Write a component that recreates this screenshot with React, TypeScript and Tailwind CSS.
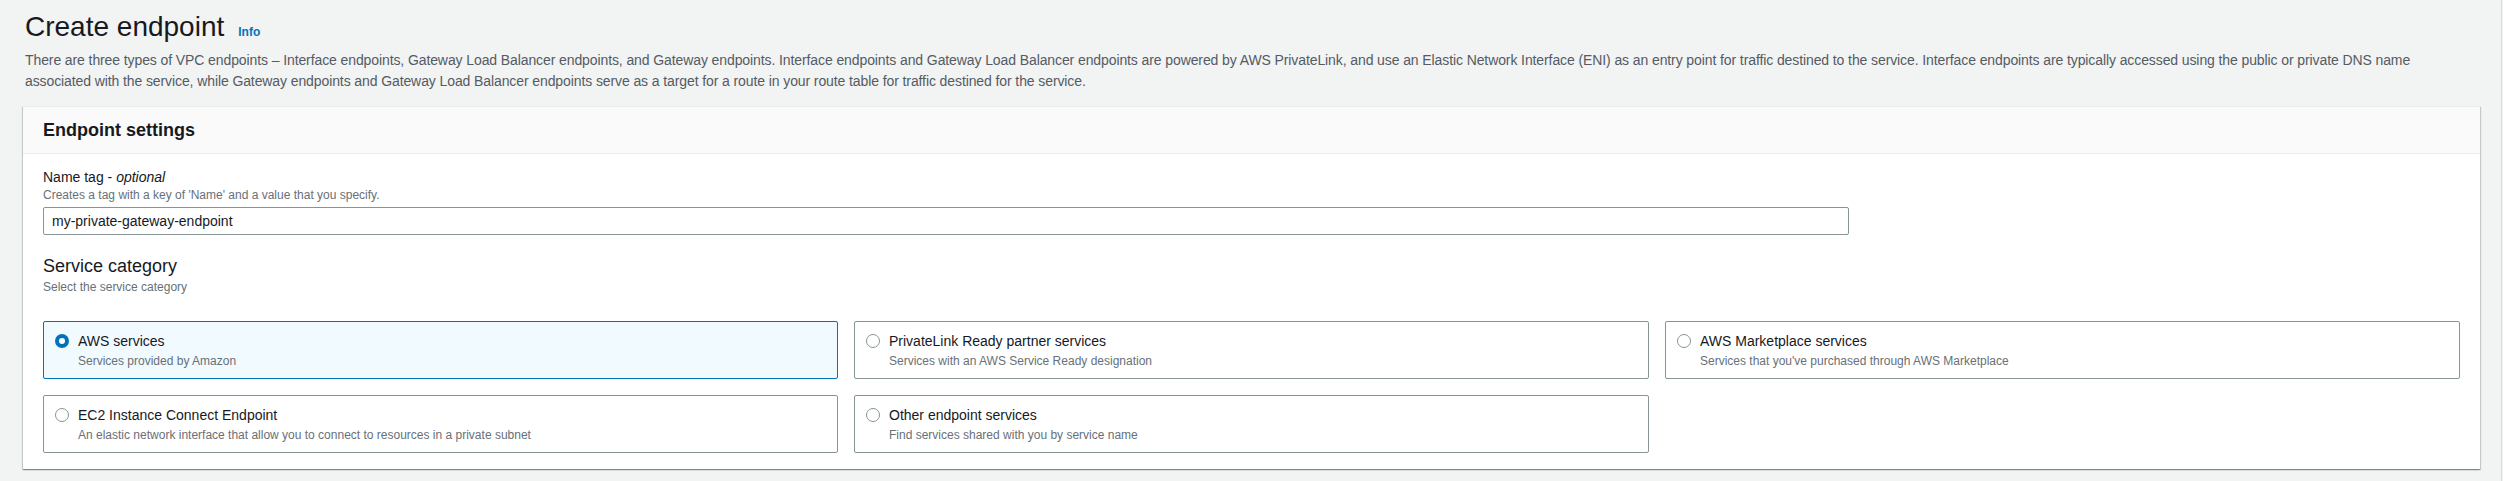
import React from "react";

type Opt = { title: string; desc: string; selected?: boolean };

const options: Opt[] = [
  { title: "AWS services", desc: "Services provided by Amazon", selected: true },
  { title: "PrivateLink Ready partner services", desc: "Services with an AWS Service Ready designation" },
  { title: "AWS Marketplace services", desc: "Services that you've purchased through AWS Marketplace" },
  { title: "EC2 Instance Connect Endpoint", desc: "An elastic network interface that allow you to connect to resources in a private subnet" },
  { title: "Other endpoint services", desc: "Find services shared with you by service name" },
];

function Radio({ selected }: { selected?: boolean }) {
  return selected ? (
    <span className="mt-[3px] box-border block h-[14px] w-[14px] shrink-0 rounded-full border-[4px] border-[#0073bb] bg-white" />
  ) : (
    <span className="mt-[3px] box-border block h-[14px] w-[14px] shrink-0 rounded-full border border-[#879596] bg-white" />
  );
}

function Tile({ o }: { o: Opt }) {
  return (
    <div
      className={
        o.selected
          ? "flex gap-[9px] rounded-[2px] border border-[#0073bb] bg-[#f1faff] pl-[11px] pr-3 py-[9px]"
          : "flex gap-[9px] rounded-[2px] border border-[#879596] bg-white pl-[11px] pr-3 py-[9px]"
      }
    >
      <Radio selected={o.selected} />
      <div className="flex flex-col">
        <div className="text-[14px] leading-5 text-[#16191f]">{o.title}</div>
        <div className="mt-[2px] text-[12px] leading-4 text-[#687078]">{o.desc}</div>
      </div>
    </div>
  );
}

export default function App() {
  return (
    <div
      className="flex h-[481px] w-full bg-[#f2f3f3]"
      style={{ fontFamily: '"Liberation Sans", Arial, sans-serif' }}
    >
      <div className="flex-1 border-r border-[#d5dbdb] pl-[23px] pr-[21px]">
        <div className="flex items-baseline gap-[14px] pl-[2px] pt-[9px]">
          <h1 className="text-[28px] leading-[36px] font-normal text-[#16191f]">Create endpoint</h1>
          <span className="text-[12px] font-bold leading-4 text-[#0073bb]">Info</span>
        </div>
        <p className="mt-[5px] whitespace-nowrap pl-[2px] text-[14px] leading-[21px] tracking-[-0.1px] text-[#545b64]">
          There are three types of VPC endpoints – Interface endpoints, Gateway Load Balancer endpoints, and Gateway endpoints. Interface endpoints and Gateway Load Balancer endpoints are powered by AWS PrivateLink, and use an Elastic Network Interface (ENI) as an entry point for traffic destined to the service. Interface endpoints are typically accessed using the public or private DNS name
          <br />
          associated with the service, while Gateway endpoints and Gateway Load Balancer endpoints serve as a target for a route in your route table for traffic destined for the service.
        </p>
        <div className="mt-[14px] border-t border-[#eaeded] bg-white shadow-[0_1px_1px_0_rgba(0,28,36,0.3),1px_1px_1px_0_rgba(0,28,36,0.15),-1px_1px_1px_0_rgba(0,28,36,0.15)]">
          <div className="border-b border-[#eaeded] bg-[#fafafa] px-5 py-[12px]">
            <h2 className="text-[18px] font-bold leading-[22px] text-[#16191f]">Endpoint settings</h2>
          </div>
          <div className="px-5 pt-[13px] pb-[16px]">
            <div className="text-[14px] leading-5 text-[#16191f]">
              Name tag - <i>optional</i>
            </div>
            <div className="text-[12px] leading-4 text-[#687078]">
              Creates a tag with a key of 'Name' and a value that you specify.
            </div>
            <div className="mt-[4px] flex h-[28px] w-[1806px] items-center rounded-[2px] border border-[#879596] bg-white px-[8px] text-[14px] text-[#16191f]">
              my-private-gateway-endpoint
            </div>
            <h3 className="mt-[20px] text-[18px] font-normal leading-[22px] text-[#16191f]">Service category</h3>
            <div className="mt-[2px] text-[12px] leading-4 text-[#687078]">Select the service category</div>
            <div className="mt-[26px] grid grid-cols-3 gap-4">
              {options.map((o) => (
                <Tile key={o.title} o={o} />
              ))}
            </div>
          </div>
        </div>
      </div>
      <div className="w-px" />
    </div>
  );
}
